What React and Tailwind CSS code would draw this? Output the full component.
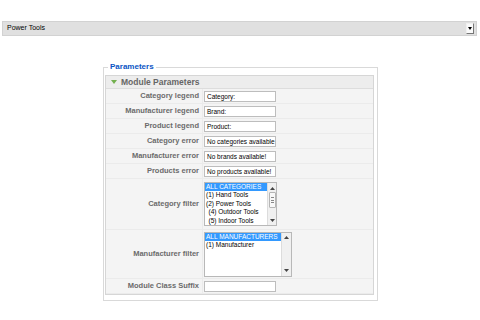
import React from 'react';

const ArrowUp = () => (
  <svg width="5" height="3" viewBox="0 0 5 3"><path d="M0 3 L2.5 0 L5 3 Z" fill="#444" /></svg>
);
const ArrowDown = () => (
  <svg width="5" height="3" viewBox="0 0 5 3"><path d="M0 0 L2.5 3 L5 0 Z" fill="#444" /></svg>
);

// fake list-box scrollbar
const Scrollbar = ({ thumb = true, width = 'w-[9px]' }) => (
  <div className={`${width} h-full bg-[#f0f0f0] border-l border-[#dcdcdc] flex flex-col items-center justify-between py-[2px]`}>
    <div className="h-[6px] flex items-center"><ArrowUp /></div>
    {thumb && (
      <div className="w-[7px] h-[16px] -mt-[8px] bg-[#f8f8f8] border border-[#b5b5b5] rounded-[1px] flex flex-col items-center justify-center gap-[1.5px]">
        <div className="w-[3px] h-px bg-[#888]" />
        <div className="w-[3px] h-px bg-[#888]" />
        <div className="w-[3px] h-px bg-[#888]" />
      </div>
    )}
    <div className="h-[6px] flex items-center"><ArrowDown /></div>
  </div>
);

const TextInput = ({ value = '' }) => (
  <div className="w-[72px] h-[11px] border border-[#bdbdbd] bg-white pl-[2px] overflow-hidden whitespace-nowrap text-[6.5px] leading-[9px] text-black">
    {value}
  </div>
);

const Row = ({ label, height = 'h-[15px]', children }) => (
  <div className={`flex ${height}`}>
    <div className="w-[97px] shrink-0 flex items-center justify-end pr-[3px] border-b border-r border-[#ebebeb] text-[7.5px] font-bold text-[#6b6b6b] whitespace-nowrap">
      {label}
    </div>
    <div className="flex-1 flex items-center pl-[1px] border-b border-[#ebebeb]">
      {children}
    </div>
  </div>
);

export default function App() {
  return (
    <div className="w-[480px] h-[320px] bg-white overflow-hidden font-['Liberation_Sans',Arial,sans-serif]">
      {/* top select */}
      <div className="pt-[21px] pl-[2px]">
        <div className="w-[475px] h-[15px] border border-[#d2d2d2] bg-[#e0e0e0] flex items-center justify-between pl-[4px] pr-[2px]">
          <span className="text-[7px] text-black">Power Tools</span>
          <div className="w-[8px] h-[11px] bg-[#fafafa] border-t border-l border-[#f0f0f0] border-r border-b border-r-[#777] border-b-[#777] flex items-center justify-center">
            <svg width="4" height="3" viewBox="0 0 4 3"><path d="M0 0 H4 L2 3 Z" fill="#000" /></svg>
          </div>
        </div>
      </div>

      <fieldset className="ml-[103px] mt-[26px] w-[275px] border border-[#d9d9d9] pl-[1px] pr-[3px] pt-[3px] pb-[5px]">
        <legend className="ml-[3px] px-[2px] text-[8px] leading-[10px] font-bold text-[#0b55c4]">Parameters</legend>
        <div className="border border-[#d6d6d6] bg-[#f4f4f4]">
          {/* panel header */}
          <div className="h-[13px] bg-[#ededed] border-b border-[#dddddd] flex items-center pl-[5px] gap-[4px]">
            <svg width="6" height="4" viewBox="0 0 6 4"><path d="M0 0 H6 L3 4 Z" fill="#73b04f" /></svg>
            <span className="text-[8.5px] font-bold text-[#666] leading-none">Module Parameters</span>
          </div>

          <Row label="Category legend"><TextInput value="Category:" /></Row>
          <Row label="Manufacturer legend"><TextInput value="Brand:" /></Row>
          <Row label="Product legend"><TextInput value="Product:" /></Row>
          <Row label="Category error"><TextInput value="No categories available" /></Row>
          <Row label="Manufacturer error"><TextInput value="No brands available!" /></Row>
          <Row label="Products error"><TextInput value="No products available!" /></Row>

          <Row label="Category filter" height="h-[51px]">
            <div className="w-[73px] h-[44px] border border-[#b8b8b8] bg-white flex">
              <div className="flex-1 text-[6.5px] leading-[8.4px] text-black whitespace-nowrap overflow-hidden">
                <div className="bg-[#3399ff] text-white pl-[1px]">ALL CATEGORIES</div>
                <div className="pl-[1px]">(1) Hand Tools</div>
                <div className="pl-[1px]">(2) Power Tools</div>
                <div className="pl-[3.5px]">(4) Outdoor Tools</div>
                <div className="pl-[3.5px]">(5) Indoor Tools</div>
              </div>
              <Scrollbar />
            </div>
          </Row>

          <Row label="Manufacturer filter" height="h-[49px]">
            <div className="w-[88px] h-[45px] border border-[#b8b8b8] bg-white flex">
              <div className="flex-1 text-[6.5px] leading-[8.4px] text-black whitespace-nowrap overflow-hidden">
                <div className="bg-[#3399ff] text-white pl-[1px]">ALL MANUFACTURERS</div>
                <div className="pl-[1px]">(1) Manufacturer</div>
              </div>
              <Scrollbar thumb={false} width="w-[10px]" />
            </div>
          </Row>

          <Row label="Module Class Suffix"><TextInput /></Row>
        </div>
      </fieldset>
    </div>
  );
}
